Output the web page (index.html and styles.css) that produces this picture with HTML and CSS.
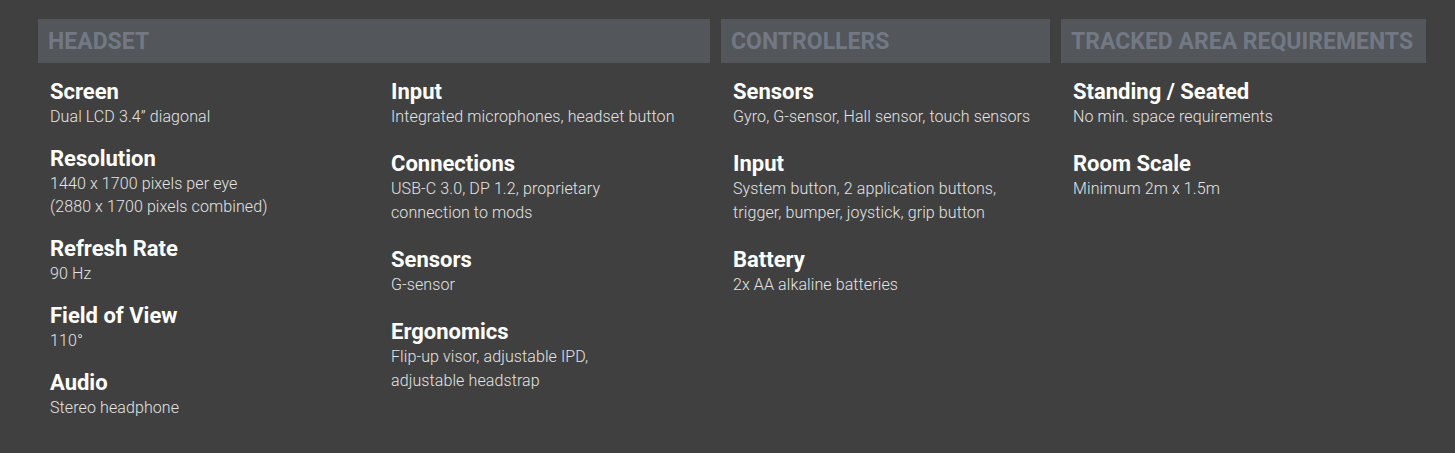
FILE: index.html
```html
<!DOCTYPE html>
<html lang="en">
<head>
<meta charset="utf-8">
<title>Specs</title>
<link rel="stylesheet" href="styles.css">
</head>
<body>
<div class="specs">
  <div class="bar bar-wide">HEADSET</div>
  <div class="bar">CONTROLLERS</div>
  <div class="bar">TRACKED AREA REQUIREMENTS</div>

  <div class="col col-tight">
    <div class="item"><h3>Screen</h3><p>Dual LCD 3.4” diagonal</p></div>
    <div class="item"><h3>Resolution</h3><p>1440 x 1700 pixels per eye<br>(2880 x 1700 pixels combined)</p></div>
    <div class="item"><h3>Refresh Rate</h3><p>90 Hz</p></div>
    <div class="item"><h3>Field of View</h3><p>110°</p></div>
    <div class="item"><h3>Audio</h3><p>Stereo headphone</p></div>
  </div>

  <div class="col">
    <div class="item"><h3>Input</h3><p>Integrated microphones, headset button</p></div>
    <div class="item"><h3>Connections</h3><p>USB-C 3.0, DP 1.2, proprietary<br>connection to mods</p></div>
    <div class="item"><h3>Sensors</h3><p>G-sensor</p></div>
    <div class="item"><h3>Ergonomics</h3><p>Flip-up visor, adjustable IPD,<br>adjustable headstrap</p></div>
  </div>

  <div class="col">
    <div class="item"><h3>Sensors</h3><p>Gyro, G-sensor, Hall sensor, touch sensors</p></div>
    <div class="item"><h3>Input</h3><p>System button, 2 application buttons,<br>trigger, bumper, joystick, grip button</p></div>
    <div class="item"><h3>Battery</h3><p>2x AA alkaline batteries</p></div>
  </div>

  <div class="col">
    <div class="item"><h3>Standing / Seated</h3><p>No min. space requirements</p></div>
    <div class="item"><h3>Room Scale</h3><p>Minimum 2m x 1.5m</p></div>
  </div>
</div>
</body>
</html>
```

FILE: styles.css
```css
html, body {
  margin: 0;
  padding: 0;
  background: #404040;
}

body {
  font-family: Roboto, "Liberation Sans", Arial, sans-serif;
  color: #e2e2e2;
  width: 1455px;
  height: 453px;
  overflow: hidden;
}

.specs {
  display: grid;
  grid-template-columns: 331px 330px 329px 365px;
  grid-template-rows: 44px auto;
  column-gap: 11px;
  padding: 19px 0 0 38px;
}

.bar {
  background: #53565b;
  color: #727984;
  font-weight: 700;
  font-size: 23px;
  height: 44px;
  line-height: 46px;
  padding-left: 10px;
  white-space: nowrap;
  overflow: hidden;
}

.bar-wide {
  grid-column: span 2;
}

.col {
  padding: 15px 0 0 11px;
}

.col + .col + .col {
  padding-left: 12px;
}

.col-tight {
  padding: 16px 0 0 12px;
}

.item {
  margin-bottom: 21px;
}

.item h3 {
  margin: 0;
  font-size: 22px;
  font-weight: 700;
  line-height: 27px;
  color: #ffffff;
}

.item p {
  margin: 0;
  font-size: 16px;
  font-weight: 300;
  line-height: 24px;
  letter-spacing: 0.1px;
  color: #e4e4e4;
}

.col-tight .item {
  margin-bottom: 18px;
}

.col-tight .item h3 {
  line-height: 26px;
}

.col-tight .item p {
  line-height: 23px;
}
```
